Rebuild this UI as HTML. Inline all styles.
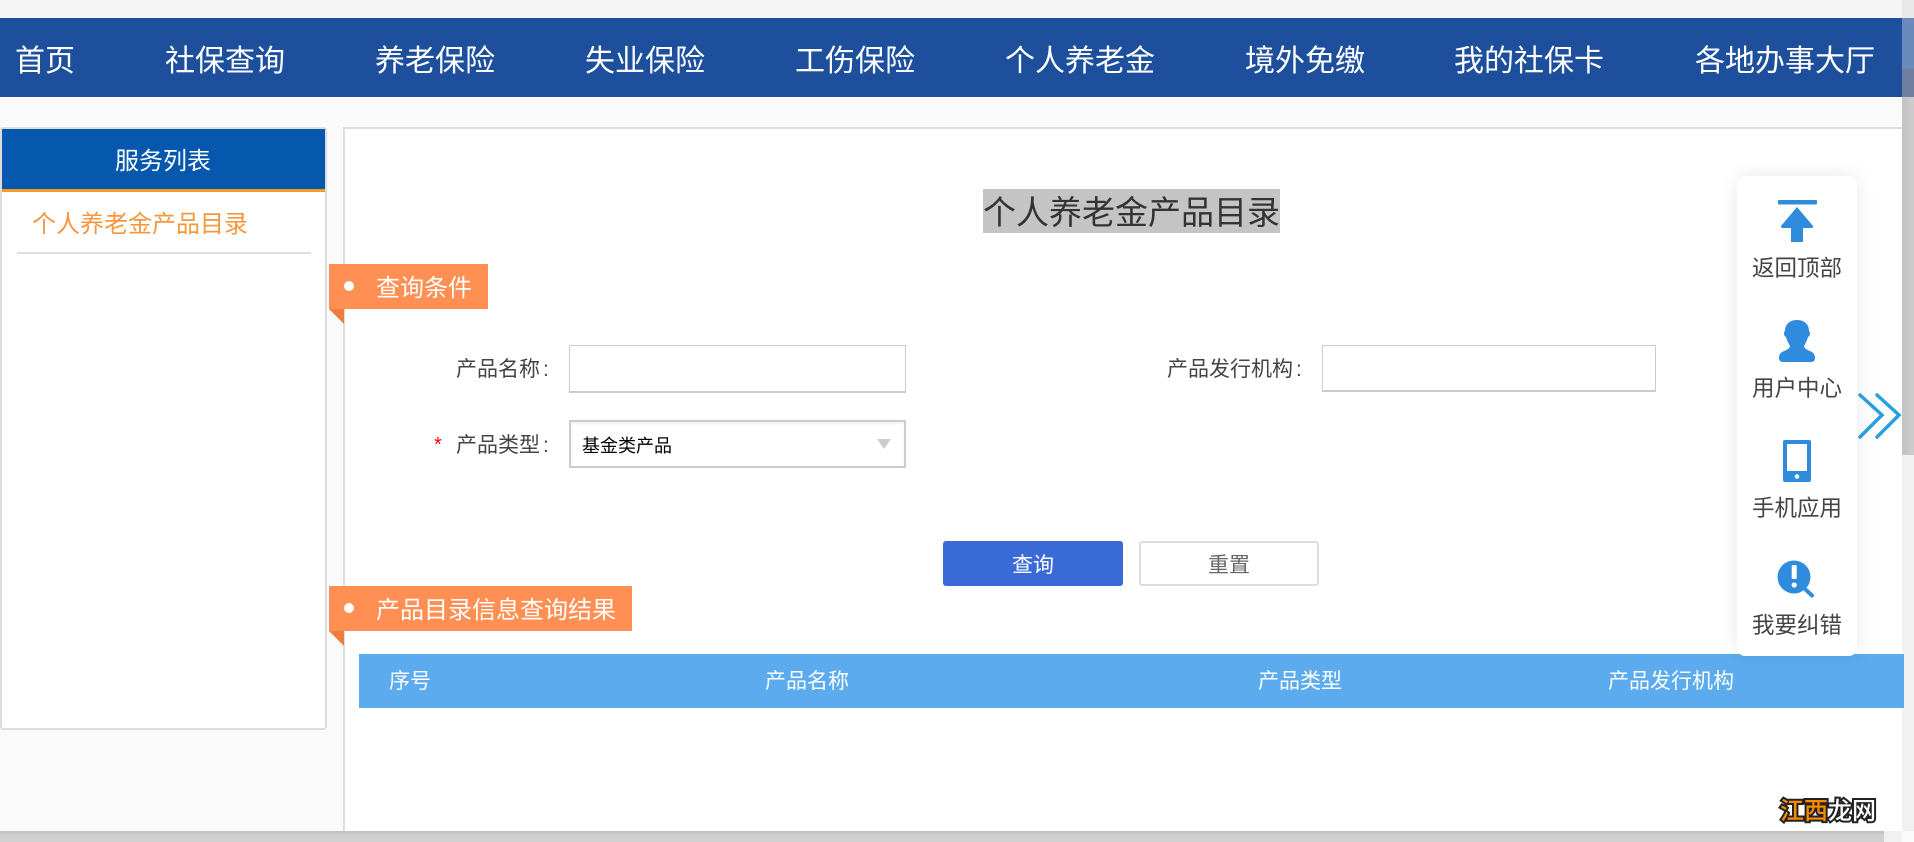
<!DOCTYPE html>
<html lang="zh-CN">
<head>
<meta charset="utf-8">
<title>个人养老金产品目录</title>
<style>
html,body{margin:0;padding:0;width:1914px;height:842px;overflow:hidden;background:#fafafa;}
body{position:relative;font-family:"Liberation Sans","Noto Sans CJK SC",sans-serif;}
.b{position:absolute;box-sizing:border-box;}
.t{position:absolute;white-space:nowrap;line-height:1;}
.nav{color:#fff;font-size:30px;top:47px;}
.lab{color:#444;font-size:21px;}
.th{color:#fff;font-size:21px;top:671px;}
.fl{color:#444;font-size:22.5px;left:1752px;}
.tag{color:#fff;font-size:24px;}
</style>
</head>
<body>
<div class="b" style="left:0;top:0;width:1914px;height:18px;background:#f5f5f5"></div>
<div class="b" style="left:0;top:18px;width:1902px;height:79px;background:#1e4f9c"></div>
<div class="t nav" style="left:15px">首页</div>
<div class="t nav" style="left:165px">社保查询</div>
<div class="t nav" style="left:375px">养老保险</div>
<div class="t nav" style="left:585px">失业保险</div>
<div class="t nav" style="left:795px">工伤保险</div>
<div class="t nav" style="left:1005px">个人养老金</div>
<div class="t nav" style="left:1245px">境外免缴</div>
<div class="t nav" style="left:1454px">我的社保卡</div>
<div class="t nav" style="left:1695px">各地办事大厅</div>

<!-- sidebar -->
<div class="b" style="left:0;top:127px;width:327px;height:603px;background:#fff;border:2px solid #ddd;border-radius:3px"></div>
<div class="b" style="left:2px;top:129px;width:323px;height:60px;background:#0558ae"></div>
<div class="b" style="left:2px;top:189px;width:323px;height:3px;background:#f59a23"></div>
<div class="t" style="left:115px;top:150px;font-size:24px;color:#fff">服务列表</div>
<div class="t" style="left:32px;top:213px;font-size:24px;color:#f7963d">个人养老金产品目录</div>
<div class="b" style="left:17px;top:252px;width:294px;height:2px;background:#ddd"></div>

<!-- main -->
<div class="b" style="left:343px;top:127px;width:1559px;height:704px;background:#fff;border-top:2px solid #ddd;border-left:2px solid #ddd"></div>
<div class="b" style="left:983px;top:189px;width:297px;height:44px;background:#c4c4c4"></div>
<div class="t" style="left:983px;top:196px;font-size:33px;color:#333">个人养老金产品目录</div>

<!-- tag 1 -->
<div class="b" style="left:329px;top:264px;width:159px;height:45px;background:#ff8f52"></div>
<div class="b" style="left:344px;top:281px;width:10px;height:10px;background:#fff;border-radius:50%"></div>
<div class="t tag" style="left:376px;top:277px">查询条件</div>

<!-- form -->
<div class="t lab" style="left:456px;top:359px">产品名称</div>
<div class="t lab" style="left:543px;top:359px">:</div>
<div class="b" style="left:569px;top:345px;width:337px;height:48px;background:#fff;border:1px solid #ccc;border-bottom-width:2px"></div>
<div class="t lab" style="left:1167px;top:359px">产品发行机构</div>
<div class="t lab" style="left:1296px;top:359px">:</div>
<div class="b" style="left:1322px;top:345px;width:334px;height:47px;background:#fff;border:1px solid #ccc;border-bottom-width:2px"></div>
<div class="t" style="left:434px;top:435px;font-size:20px;color:#f00">*</div>
<div class="t lab" style="left:456px;top:435px">产品类型</div>
<div class="t lab" style="left:543px;top:435px">:</div>
<div class="b" style="left:569px;top:420px;width:337px;height:48px;background:#fff;border:2px solid #ccc;box-shadow:inset 0 2px 2px #f2f2f2"></div>
<div class="t" style="left:582px;top:437px;font-size:18px;color:#000">基金类产品</div>

<!-- buttons -->
<div class="b" style="left:943px;top:541px;width:180px;height:45px;background:#396ad6;border-radius:3px"></div>
<div class="t" style="left:1012px;top:555px;font-size:21px;color:#fff">查询</div>
<div class="b" style="left:1139px;top:541px;width:180px;height:45px;background:#fff;border:2px solid #ddd;border-radius:3px"></div>
<div class="t" style="left:1208px;top:555px;font-size:21px;color:#666">重置</div>

<!-- tag 2 -->
<div class="b" style="left:329px;top:586px;width:303px;height:45px;background:#ff8f52"></div>
<div class="b" style="left:344px;top:603px;width:10px;height:10px;background:#fff;border-radius:50%"></div>
<div class="t tag" style="left:376px;top:599px">产品目录信息查询结果</div>

<!-- scrollbars -->
<div class="b" style="left:1902px;top:0;width:12px;height:18px;background:#e8e8e8"></div>
<div class="b" style="left:1902px;top:18px;width:12px;height:51px;background:#6a8abb"></div>
<div class="b" style="left:1902px;top:69px;width:12px;height:28px;background:#6f7f9e"></div>
<div class="b" style="left:1902px;top:97px;width:12px;height:358px;background:linear-gradient(90deg,#c2c2c2,#cdcdcd)"></div>
<div class="b" style="left:1902px;top:455px;width:12px;height:376px;background:#f1f1f1"></div>
<div class="b" style="left:0;top:831px;width:1884px;height:11px;background:linear-gradient(180deg,#bfbfbf,#cfcfcf 40%,#d0d0d0)"></div>
<div class="b" style="left:1884px;top:831px;width:18px;height:11px;background:#f1f1f1"></div>
<div class="b" style="left:1902px;top:831px;width:12px;height:11px;background:#fafafa"></div>

<!-- table head -->
<div class="b" style="left:359px;top:654px;width:1545px;height:54px;background:#5cabee"></div>
<div class="t th" style="left:389px">序号</div>
<div class="t th" style="left:765px">产品名称</div>
<div class="t th" style="left:1258px">产品类型</div>
<div class="t th" style="left:1608px">产品发行机构</div>

<!-- floating panel -->
<div class="b" style="left:1737px;top:176px;width:120px;height:480px;background:#fff;border-radius:8px;box-shadow:0 0 20px rgba(0,0,0,.09)"></div>
<div class="t fl" style="top:258px">返回顶部</div>
<div class="t fl" style="top:378px">用户中心</div>
<div class="t fl" style="top:498px">手机应用</div>
<div class="t fl" style="top:615px">我要纠错</div>

<svg class="b" style="left:0;top:0" width="1914" height="842" viewBox="0 0 1914 842">
  <polygon points="329,309 344,309 344,324" fill="#ed7d3c"/>
  <polygon points="329,631 344,631 344,646" fill="#ed7d3c"/>
  <polygon points="877,439 891,439 884,449" fill="#ccc"/>
  <rect x="1778" y="200" width="39" height="4.500" rx="1" fill="#2f8cdd"/>
  <path d="M1797 207L1813 226Q1813.500 228 1811 228L1803 228L1803 242L1791 242L1791 228L1783 228Q1780.500 228 1781 226Z" fill="#2f8cdd"/>
  <path d="M1797 320C1805 320 1809 325 1809 331C1811 333 1810 336 1808 337C1807 341 1805 344 1804 346C1804 348 1807 350 1811 351.500C1814 353 1815 355 1815 358C1815 361 1813 362 1811 362L1783 362C1781 362 1779 361 1779 358C1779 355 1780 353 1783 351.500C1787 350 1790 348 1790 346C1789 344 1787 341 1786 337C1784 336 1783 333 1785 331C1785 325 1789 320 1797 320Z" fill="#2f8cdd"/>
  <rect x="1783" y="440" width="28" height="42" rx="2" fill="#2f8cdd"/>
  <rect x="1787" y="444" width="20" height="27" fill="#fff"/>
  <circle cx="1797" cy="476.500" r="2.300" fill="#fff"/>
  <circle cx="1794" cy="577" r="16.500" fill="#2f8cdd"/>
  <rect x="1791.700" y="565" width="5" height="14" rx="1" fill="#fff"/>
  <circle cx="1794.200" cy="585" r="2.600" fill="#fff"/>
  <path d="M1806 590L1812 595.500" stroke="#2f8cdd" stroke-width="4" stroke-linecap="round" fill="none"/>
  <path d="M1860 395L1882 415L1860 437M1877 395L1899 415L1877 437" stroke="#2a9fdf" stroke-width="3.500" stroke-linecap="round" stroke-linejoin="miter" fill="none"/>
</svg>

<!-- watermark -->
<div class="t" style="left:1780px;top:800px;font-size:24px;font-weight:500;-webkit-text-stroke:4px #222;paint-order:stroke fill"><span style="color:#ff8c00">江西</span><span style="color:#fff">龙网</span></div>
</body>
</html>
